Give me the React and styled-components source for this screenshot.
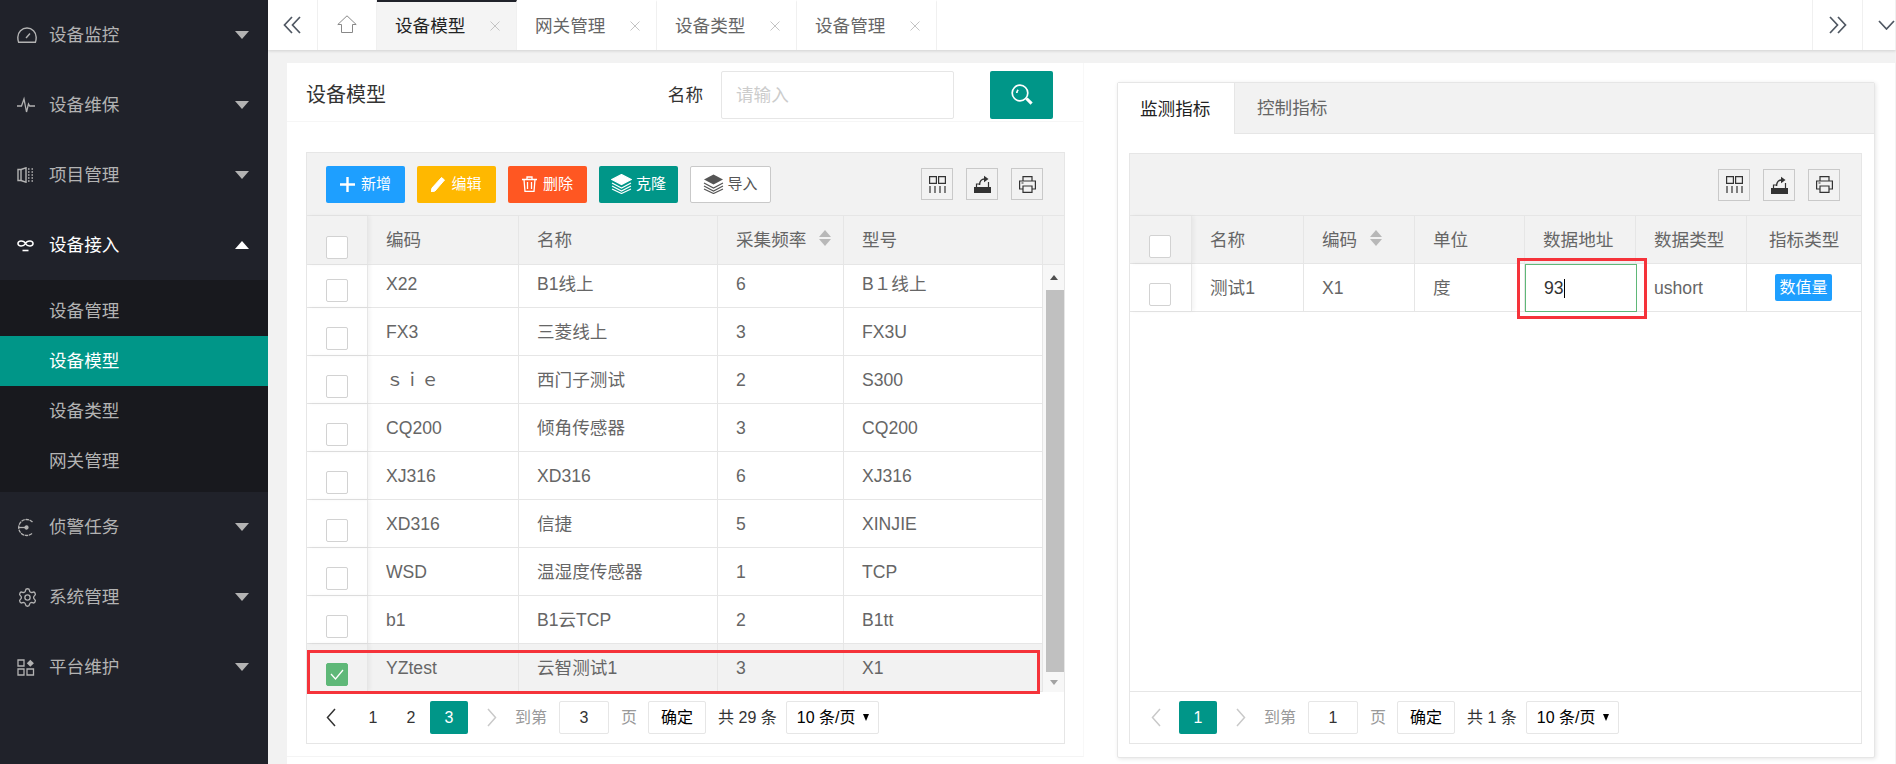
import styled, { createGlobalStyle } from "styled-components";
import { Settings } from "lucide-react";

const GlobalStyle = createGlobalStyle`
    html, body {
        margin: 0;
        height: 100%;
        overflow: hidden;
        background: #f2f2f2;
        font-family: "Liberation Sans", "Noto Sans CJK SC", sans-serif;
        line-height: 20px;
        color: #666;
    }
    * { box-sizing: border-box; }
`;

const Shell = styled.div`
    display: flex;
    height: 100vh;
`;

/* sidebar */
const Sidebar = styled.nav`
    width: 268px;
    flex: none;
    background: #20222a;
`;
const NavItem = styled.div`
    display: flex;
    align-items: center;
    height: 70px;
    padding: 0 19px 0 17px;
    font-size: 17.6px;
    color: ${(p) => (p.$open ? "#fff" : "#b3b3b3")};
`;
const NavIcon = styled.span`
    width: 32px;
    flex: none;
    display: flex;
    align-items: center;
`;
const NavLabel = styled.span`
    flex: 1;
`;
const Caret = styled.i`
    width: 0;
    height: 0;
    border-left: 7.5px solid transparent;
    border-right: 7.5px solid transparent;
    border-top: ${(p) => (p.$up ? "0" : "8px solid currentColor")};
    border-bottom: ${(p) => (p.$up ? "8px solid currentColor" : "0")};
`;
const SubMenu = styled.div`
    background: #18191e;
    padding: 6px 0;
`;
const SubItem = styled.div`
    height: 50px;
    line-height: 50px;
    padding-left: 49px;
    font-size: 17.6px;
    color: ${(p) => (p.$active ? "#fff" : "#b3b3b3")};
    background: ${(p) => (p.$active ? "#009688" : "transparent")};
`;

/* top tabs */
const Main = styled.main`
    flex: 1;
    min-width: 0;
    display: flex;
    flex-direction: column;
`;
const TabBar = styled.header`
    height: 50px;
    flex: none;
    display: flex;
    background: #fff;
    box-shadow: 0 1px 3px rgba(0, 0, 0, 0.14);
    position: relative;
    z-index: 2;
`;
const BarButton = styled.div`
    width: ${(p) => p.$w}px;
    flex: none;
    display: flex;
    align-items: center;
    justify-content: ${(p) => p.$justify || "center"};
    padding-bottom: ${(p) => p.$lift || 0}px;
    color: ${(p) => p.$fg || "#4f5762"};
    border-right: 1px solid #f0f0f0;
    overflow: hidden;
`;
const PageTab = styled.div`
    width: 140px;
    flex: none;
    display: flex;
    align-items: center;
    justify-content: space-between;
    padding: 0 16px 0 18px;
    font-size: 17.6px;
    color: ${(p) => (p.$active ? "#222" : "#666")};
    background: ${(p) => (p.$active ? "#f4f4f4" : "#fff")};
    border-right: 1px solid #f0f0f0;
    border-top: 2px solid ${(p) => (p.$active ? "#20222a" : "transparent")};
`;
const BarSpacer = styled.div`
    flex: 1;
    border-right: 1px solid #f0f0f0;
`;

/* content */
const Content = styled.div`
    flex: 1;
    min-height: 0;
    padding: 13px 1px 0 19px;
`;
const Panel = styled.div`
    height: 100%;
    display: flex;
    align-items: flex-start;
    background: #fff;
`;
const LeftPane = styled.section`
    width: 797px;
    height: 694px;
    flex: none;
    border-right: 1px solid #f8f8f8;
    border-bottom: 1px solid #f4f4f4;
`;
const PaneHeader = styled.div`
    height: 59px;
    display: flex;
    align-items: center;
    padding: 6px 30px 0 19px;
    border-bottom: 1px solid #f6f6f6;
    margin-bottom: 30px;
`;
const PaneTitle = styled.h2`
    margin: 0;
    font-size: 20px;
    font-weight: 400;
    color: #333;
    flex: 1;
`;
const FieldLabel = styled.label`
    font-size: 17.6px;
    color: #333;
    margin-right: 18px;
`;
const SearchInput = styled.input`
    width: 233px;
    height: 48px;
    padding: 0 14px;
    border: 1px solid #e6e6e6;
    border-radius: 2px;
    font: inherit;
    font-size: 17.6px;
    outline: none;
    &::placeholder { color: #ccc; }
`;
const SearchButton = styled.button`
    width: 63px;
    height: 48px;
    margin-left: 36px;
    border: 0;
    border-radius: 2px;
    background: #009688;
    color: #fff;
    display: flex;
    align-items: center;
    justify-content: center;
`;

/* table */
const TableBox = styled.div`
    position: relative;
    display: flex;
    flex-direction: column;
    width: ${(p) => p.$w}px;
    height: ${(p) => p.$h}px;
    margin-left: ${(p) => p.$ml}px;
    border: 1px solid #e6e6e6;
`;
const Toolbar = styled.div`
    height: ${(p) => p.$h}px;
    flex: none;
    display: flex;
    align-items: center;
    padding: 0 21px 0 19px;
    background: #f2f2f2;
    border-bottom: 1px solid #e6e6e6;
`;
const ButtonGroup = styled.div`
    display: flex;
    gap: 12px;
`;
const ToolGroup = styled.div`
    display: flex;
    gap: 13px;
    margin-left: auto;
`;
const ActionButton = styled.button`
    width: ${(p) => p.$w || 79}px;
    height: 37px;
    padding: 0;
    display: flex;
    align-items: center;
    justify-content: center;
    gap: ${(p) => p.$gap || 6}px;
    font: inherit;
    font-size: 15px;
    color: ${(p) => p.$fg || "#fff"};
    background: ${(p) => p.$bg};
    border: ${(p) => (p.$outlined ? "1px solid #c9c9c9" : "0")};
    border-radius: 2px;
`;
const ToolButton = styled.div`
    width: 32px;
    height: 32px;
    display: flex;
    align-items: center;
    justify-content: center;
    border: 1px solid #c9c9c9;
    color: #333;
`;
const Grid = styled.div`
    display: grid;
    grid-template-columns: ${(p) => p.$cols};
    height: ${(p) => p.$h}px;
    flex: none;
    border-bottom: 1px solid #e6e6e6;
    background: ${(p) => (p.$shade ? "#f2f2f2" : "#fff")};
    font-size: 17.6px;
    color: #666;
`;
const Cell = styled.div`
    display: flex;
    align-items: center;
    padding-left: ${(p) => p.$pad ?? 18}px;
    border-right: ${(p) => (p.$last ? "0" : "1px solid #e6e6e6")};
    white-space: nowrap;
    min-width: 0;
`;
const CheckCell = styled(Cell)`
    justify-content: flex-start;
    padding: 14px 0 0 19px;
    box-shadow: 2px 0 4px rgba(0, 0, 0, 0.05);
    position: relative;
`;
const CheckBox = styled.span`
    width: 22px;
    height: 23px;
    display: flex;
    align-items: center;
    justify-content: center;
    border-radius: 2px;
    border: 1px solid ${(p) => (p.$checked ? "#5fb878" : "#d2d2d2")};
    background: ${(p) => (p.$checked ? "#5fb878" : "#fff")};
    color: #fff;
`;
const SortMark = styled.span`
    display: inline-flex;
    flex-direction: column;
    gap: 2px;
    margin: -4px 0 0 13px;
    color: #b8b8b8;
`;
const SortUp = styled.i`
    border-left: 6.5px solid transparent;
    border-right: 6.5px solid transparent;
    border-bottom: 7px solid currentColor;
`;
const SortDown = styled.i`
    border-left: 6.5px solid transparent;
    border-right: 6.5px solid transparent;
    border-top: 7px solid currentColor;
`;
const TableBody = styled.div`
    flex: 1;
    min-height: 0;
    display: flex;
`;
const RowsViewport = styled.div`
    flex: 1;
    min-width: 0;
    overflow: hidden;
`;
const Rows = styled.div`
    margin-top: -5px;
`;
const Scrollbar = styled.div`
    width: 21px;
    flex: none;
    display: flex;
    flex-direction: column;
    background: #f7f7f7;
`;
const ScrollEnd = styled.div`
    height: ${(p) => p.$h}px;
    flex: none;
    display: flex;
    align-items: center;
    justify-content: center;
`;
const ScrollUp = styled.i`
    border-left: 4.5px solid transparent;
    border-right: 4.5px solid transparent;
    border-bottom: 5px solid #505050;
`;
const ScrollDown = styled.i`
    border-left: 4.5px solid transparent;
    border-right: 4.5px solid transparent;
    border-top: 5px solid #a3a3a3;
`;
const ScrollThumb = styled.div`
    flex: 1;
    margin: 0 0 0 3px;
    background: #c0c0c0;
`;
const EmptyBody = styled.div`
    flex: 1;
    min-height: 0;
`;
const EditCell = styled.div`
    display: flex;
    align-items: center;
    padding-left: 18px;
    border: 1px solid #5fb878;
    margin: 0 -1px -1px 0;
    background: #fff;
    color: #333;
`;
const TextCaret = styled.i`
    width: 1px;
    height: 19px;
    background: #000;
`;
const Badge = styled.span`
    width: 57px;
    height: 27px;
    display: flex;
    align-items: center;
    justify-content: center;
    background: #1e9fff;
    border-radius: 2px;
    color: #fff;
    font-size: 16px;
`;
const Highlight = styled.div`
    position: absolute;
    left: ${(p) => p.$x}px;
    top: ${(p) => p.$y}px;
    width: ${(p) => p.$w}px;
    height: ${(p) => p.$h}px;
    border: 3px solid #f5333a;
    z-index: 3;
    pointer-events: none;
`;

/* pager */
const Pager = styled.div`
    height: ${(p) => p.$h}px;
    flex: none;
    display: flex;
    align-items: center;
    padding-left: ${(p) => p.$pad}px;
    font-size: 16px;
    color: #333;
    background: #fff;
    border-top: ${(p) => (p.$line ? "1px solid #e6e6e6" : "0")};
`;
const PageNum = styled.span`
    width: 38px;
    height: 33px;
    flex: none;
    display: flex;
    align-items: center;
    justify-content: center;
    border-radius: 2px;
    color: ${(p) => (p.$current ? "#fff" : "#333")};
    background: ${(p) => (p.$current ? "#009688" : "transparent")};
`;
const PageArrow = styled(PageNum)`
    color: ${(p) => (p.$off ? "#c9c9c9" : "#333")};
    margin: ${(p) => (p.$next ? "0 4px 0 5px" : "0 4px 0 0")};
`;
const Muted = styled.span`
    color: #999;
`;
const JumpInput = styled.input`
    width: 50px;
    height: 33px;
    margin: 0 12px;
    border: 1px solid #e6e6e6;
    border-radius: 2px;
    text-align: center;
    font: inherit;
    color: #333;
    outline: none;
`;
const ConfirmButton = styled.button`
    width: 58px;
    height: 33px;
    margin: 0 12px 0 11px;
    padding: 0;
    background: #fff;
    border: 1px solid #e6e6e6;
    border-radius: 2px;
    font: inherit;
    color: #000;
`;
const PageSize = styled.div`
    width: 93px;
    height: 33px;
    margin-left: 9px;
    display: flex;
    align-items: center;
    justify-content: space-between;
    padding: 0 9px 0 10px;
    border: 1px solid #e6e6e6;
    border-radius: 2px;
    color: #000;
`;
const SizeArrow = styled.i`
    border-left: 3.5px solid transparent;
    border-right: 3.5px solid transparent;
    border-top: 7px solid #000;
`;

/* right pane */
const RightPane = styled.section`
    flex: none;
    width: 758px;
    height: 676px;
    margin: 19px 0 0 33px;
    border: 1px solid #e6e6e6;
    border-radius: 2px;
    box-shadow: 1px 1px 4px rgba(0, 0, 0, 0.1);
    display: flex;
    flex-direction: column;
    background: #fff;
`;
const TabStrip = styled.div`
    height: 51px;
    flex: none;
    display: flex;
    background: #f2f2f2;
`;
const StripTab = styled.div`
    width: ${(p) => p.$w}px;
    display: flex;
    align-items: center;
    padding-left: 22px;
    font-size: 17.6px;
    color: ${(p) => (p.$active ? "#222" : "#666")};
    background: ${(p) => (p.$active ? "#fff" : "transparent")};
    border-right: ${(p) => (p.$active ? "1px solid #e6e6e6" : "0")};
    border-bottom: ${(p) => (p.$active ? "0" : "1px solid #e6e6e6")};
`;
const StripRest = styled.div`
    flex: 1;
    border-bottom: 1px solid #e6e6e6;
`;
const StripBody = styled.div`
    padding-top: 19px;
`;

/* icons */
const Svg = styled.svg`
    display: block;
    flex: none;
    fill: none;
    stroke: currentColor;
`;
const GaugeIcon = () => (
    <Svg width="20" height="16" viewBox="0 0 20 16" strokeWidth="1.4">
        <path d="M1.6 15.2Q.8 13 .8 10.2a9.2 9.2 0 0 1 18.4 0q0 2.8-.8 5z" />
        <path d="M9 11l4-4.5" />
    </Svg>
);
const PulseIcon = () => (
    <Svg width="18" height="18" viewBox="0 0 18 18" strokeWidth="1.3">
        <path d="M0 10h4.5L7 3l2.5 13 2-8 1.2 2H18" />
    </Svg>
);
const BookIcon = () => (
    <Svg width="17" height="16" viewBox="0 0 17 16" strokeWidth="1.4">
        <path d="M1 2.5h3L9 .8v14.4l-5-1.7H1z" />
        <path d="M4 2.5v11" />
        <path d="M11 2h1.5M14.5 2H16M11 5h1.5M14.5 5H16M11 8h1.5M14.5 8H16M11 11h1.5M14.5 11H16M11 14h1.5M14.5 14H16" />
    </Svg>
);
const LinkIcon = () => (
    <Svg width="17" height="13" viewBox="0 0 17 13" strokeWidth="1.6">
        <path d="M8.5 4.5C7 1.500 1 1 1 4.500S7 7.500 8.500 4.500 16 1 16 4.500 10 7.500 8.500 4.500z" />
        <path d="M5.500 11.500h6" />
    </Svg>
);
const RadarIcon = () => (
    <Svg width="19" height="19" viewBox="0 0 19 19" strokeWidth="1.3">
        <path d="M15.500 4A8 8 0 1 0 15.500 15" strokeDasharray="3.500 .7" />
        <path d="M1 9.500h9" />
        <circle cx="9.500" cy="9.500" r="1.500" fill="currentColor" />
    </Svg>
);
const AppsIcon = () => (
    <Svg width="18" height="17" viewBox="0 0 18 17" strokeWidth="1.3">
        <path d="M1 1h6v6H1zM1 10h6v6H1zM10 10h6.500v6H10z" />
        <path d="M13.300.8l3.600 3.500-3.600 3.500-3.500-3.500z" fill="currentColor" stroke="none" />
    </Svg>
);
const ChevronsLeftIcon = () => (
    <Svg width="19" height="18" viewBox="0 0 19 18" strokeWidth="1.7">
        <path d="M9 1L1.500 9 9 17M17 1L9.500 9l7.500 8" />
    </Svg>
);
const ChevronsRightIcon = () => (
    <Svg width="18" height="18" viewBox="0 0 18 18" strokeWidth="1.7">
        <path d="M1 1l7.500 8L1 17M9 1l7.500 8L9 17" />
    </Svg>
);
const ChevronDownIcon = () => (
    <Svg width="17" height="10" viewBox="0 0 17 10" strokeWidth="1.7">
        <path d="M1 1l7.500 8L16 1" />
    </Svg>
);
const HomeIcon = () => (
    <Svg width="20" height="18" viewBox="0 0 20 18" strokeWidth="1">
        <path d="M.8 9.500L10 .8l9.200 8.700h-3.700v8h-11v-8z" />
    </Svg>
);
const CloseIcon = () => (
    <Svg width="10" height="10" viewBox="0 0 10 10" strokeWidth="1" color="#c4c4c4">
        <path d="M.5.500l9 9M9.500.500l-9 9" />
    </Svg>
);
const SearchIcon = () => (
    <Svg width="22" height="22" viewBox="0 0 22 22" strokeWidth="1.7">
        <circle cx="9" cy="9" r="7.800" />
        <path d="M5.800 9c0-1.500.5-2.500 1.400-3.200" />
        <path d="M15 15l4.500 4.500 1-1L16 14" fill="currentColor" />
    </Svg>
);
const PlusIcon = () => (
    <Svg width="15" height="15" viewBox="0 0 15 15" strokeWidth="2.400">
        <path d="M7.500 0v15M0 7.500h15" />
    </Svg>
);
const PenIcon = () => (
    <Svg width="14" height="15" viewBox="0 0 14 15" stroke="none">
        <path d="M10.500.5l3 2.500L4 14 0 15l1-4z" fill="currentColor" />
    </Svg>
);
const TrashIcon = () => (
    <Svg width="15" height="16" viewBox="0 0 15 16" strokeWidth="1.300">
        <path d="M0 3.500h15M5 3V1h5v2M2 3.500l1 12h9l1-12" />
        <path d="M5.500 6v7M9.500 6v7" />
    </Svg>
);
const LayersIcon = ({ $solid }) => (
    <Svg width="21" height="20" viewBox="0 0 21 20" strokeWidth="1.200">
        <path d="M10.500.5l9.500 5-9.500 5-9.500-5z" fill="currentColor" stroke={$solid ? "none" : "currentColor"} />
        <path d="M1 9l9.500 5L20 9M1 12l9.500 5L20 12M1 15l9.500 4.500L20 15" />
    </Svg>
);
const ColumnsIcon = () => (
    <Svg width="17" height="17" viewBox="0 0 17 17" strokeWidth="1.200">
        <path d="M.6.600h6.800v6.800H.6zM9.600.600h6.800v6.800H9.600z" />
        <path d="M1 10v7M6 10v7M11 10v7M16 10v7" />
    </Svg>
);
const ExportIcon = () => (
    <Svg width="17" height="18" viewBox="0 0 17 18" strokeWidth="1.200">
        <path d="M0 12h17v6H0z" fill="currentColor" stroke="none" />
        <path d="M2.500 12V9H5M14.500 12V7" />
        <path d="M5.500 10C5.500 6 8 4 10.500 4" strokeWidth="1.500" />
        <path d="M10 .8L14.500 4 10 7.200z" fill="currentColor" stroke="none" />
    </Svg>
);
const PrintIcon = () => (
    <Svg width="17" height="17" viewBox="0 0 17 17" strokeWidth="1.200">
        <path d="M4 5V.6h9V5M4 13H.6V5h15.800v8H13" />
        <path d="M4 10h9v6.400H4zM2.500 7h2" />
    </Svg>
);
const CheckIcon = () => (
    <Svg width="14" height="11" viewBox="0 0 14 11" strokeWidth="1.300">
        <path d="M1 5l4.500 5L13 1" />
    </Svg>
);
const PagerLeftIcon = () => (
    <Svg width="10" height="19" viewBox="0 0 10 19" strokeWidth="1.500">
        <path d="M9 1L1.500 9.500 9 18" />
    </Svg>
);
const PagerRightIcon = () => (
    <Svg width="10" height="19" viewBox="0 0 10 19" strokeWidth="1.500">
        <path d="M1 1l7.500 8.500L1 18" />
    </Svg>
);

const navTop = [
    { label: "设备监控", icon: <GaugeIcon /> },
    { label: "设备维保", icon: <PulseIcon /> },
    { label: "项目管理", icon: <BookIcon /> },
];
const navBottom = [
    { label: "侦警任务", icon: <RadarIcon /> },
    { label: "系统管理", icon: <Settings size={21} strokeWidth={1.5} /> },
    { label: "平台维护", icon: <AppsIcon /> },
];
const subItems = ["设备管理", "设备模型", "设备类型", "网关管理"];
const pageTabs = ["设备模型", "网关管理", "设备类型", "设备管理"];

const modelCols = "61px 151px 199px 126px 199px";
const modelRows = [
    ["X22", "B1线上", "6", "B１线上"],
    ["FX3", "三菱线上", "3", "FX3U"],
    ["ｓｉｅ", "西门子测试", "2", "S300"],
    ["CQ200", "倾角传感器", "3", "CQ200"],
    ["XJ316", "XD316", "6", "XJ316"],
    ["XD316", "信捷", "5", "XINJIE"],
    ["WSD", "温湿度传感器", "1", "TCP"],
    ["b1", "B1云TCP", "2", "B1tt"],
    ["YZtest", "云智测试1", "3", "X1"],
];
const metricCols = "62px 112px 111px 110px 111px 111px 1fr";

const Tools = () => (
    <ToolGroup>
        <ToolButton><ColumnsIcon /></ToolButton>
        <ToolButton><ExportIcon /></ToolButton>
        <ToolButton><PrintIcon /></ToolButton>
    </ToolGroup>
);

const Sort = () => (
    <SortMark>
        <SortUp />
        <SortDown />
    </SortMark>
);

const NavRow = ({ label, icon, open }) => (
    <NavItem $open={open}>
        <NavIcon>{icon}</NavIcon>
        <NavLabel>{label}</NavLabel>
        <Caret $up={open} />
    </NavItem>
);

export default function App() {
    return (
        <Shell>
            <GlobalStyle />
            <Sidebar>
                {navTop.map((n) => (
                    <NavRow key={n.label} {...n} />
                ))}
                <NavRow label="设备接入" icon={<LinkIcon />} open />
                <SubMenu>
                    {subItems.map((s) => (
                        <SubItem key={s} $active={s === "设备模型"}>{s}</SubItem>
                    ))}
                </SubMenu>
                {navBottom.map((n) => (
                    <NavRow key={n.label} {...n} />
                ))}
            </Sidebar>

            <Main>
                <TabBar>
                    <BarButton $w={50}><ChevronsLeftIcon /></BarButton>
                    <BarButton $w={59} $fg="#888" $lift={2}><HomeIcon /></BarButton>
                    {pageTabs.map((t, i) => (
                        <PageTab key={t} $active={i === 0}>
                            {t}
                            <CloseIcon />
                        </PageTab>
                    ))}
                    <BarSpacer />
                    <BarButton $w={50}><ChevronsRightIcon /></BarButton>
                    <BarButton $w={33} $justify="flex-end"><ChevronDownIcon /></BarButton>
                </TabBar>

                <Content>
                    <Panel>
                        <LeftPane>
                            <PaneHeader>
                                <PaneTitle>设备模型</PaneTitle>
                                <FieldLabel>名称</FieldLabel>
                                <SearchInput placeholder="请输入" />
                                <SearchButton><SearchIcon /></SearchButton>
                            </PaneHeader>

                            <TableBox $w={759} $h={592} $ml={19}>
                                <Toolbar $h={63}>
                                    <ButtonGroup>
                                        <ActionButton $bg="#1e9fff"><PlusIcon />新增</ActionButton>
                                        <ActionButton $bg="#ffb800"><PenIcon />编辑</ActionButton>
                                        <ActionButton $bg="#ff5722"><TrashIcon />删除</ActionButton>
                                        <ActionButton $bg="#009688" $gap={4}><LayersIcon />克隆</ActionButton>
                                        <ActionButton $w={81} $bg="#fff" $fg="#555" $gap={3} $outlined>
                                            <LayersIcon $solid />导入
                                        </ActionButton>
                                    </ButtonGroup>
                                    <Tools />
                                </Toolbar>
                                <Grid $cols={`${modelCols} 1fr`} $h={49} $shade>
                                    <CheckCell><CheckBox /></CheckCell>
                                    <Cell>编码</Cell>
                                    <Cell>名称</Cell>
                                    <Cell>采集频率<Sort /></Cell>
                                    <Cell>型号</Cell>
                                    <Cell $last />
                                </Grid>
                                <TableBody>
                                    <RowsViewport>
                                        <Rows>
                                            {modelRows.map((r, i) => {
                                                const selected = i === modelRows.length - 1;
                                                return (
                                                    <Grid key={r[0]} $cols={modelCols} $h={48} $shade={selected}>
                                                        <CheckCell>
                                                            <CheckBox $checked={selected}>
                                                                {selected && <CheckIcon />}
                                                            </CheckBox>
                                                        </CheckCell>
                                                        <Cell>{r[0]}</Cell>
                                                        <Cell>{r[1]}</Cell>
                                                        <Cell>{r[2]}</Cell>
                                                        <Cell>{r[3]}</Cell>
                                                    </Grid>
                                                );
                                            })}
                                        </Rows>
                                    </RowsViewport>
                                    <Scrollbar>
                                        <ScrollEnd $h={25}><ScrollUp /></ScrollEnd>
                                        <ScrollThumb />
                                        <ScrollEnd $h={20}><ScrollDown /></ScrollEnd>
                                    </Scrollbar>
                                </TableBody>
                                <Pager $h={51} $pad={5}>
                                    <PageArrow><PagerLeftIcon /></PageArrow>
                                    <PageNum>1</PageNum>
                                    <PageNum>2</PageNum>
                                    <PageNum $current>3</PageNum>
                                    <PageArrow $next $off><PagerRightIcon /></PageArrow>
                                    <Muted>到第</Muted>
                                    <JumpInput readOnly defaultValue="3" />
                                    <Muted>页</Muted>
                                    <ConfirmButton>确定</ConfirmButton>
                                    共 29 条
                                    <PageSize>10 条/页<SizeArrow /></PageSize>
                                </Pager>
                                <Highlight $x={0} $y={497} $w={733} $h={44} />
                            </TableBox>
                        </LeftPane>

                        <RightPane>
                            <TabStrip>
                                <StripTab $w={117} $active>监测指标</StripTab>
                                <StripTab $w={116}>控制指标</StripTab>
                                <StripRest />
                            </TabStrip>
                            <StripBody>
                                <TableBox $w={733} $h={591} $ml={11}>
                                    <Toolbar $h={62}>
                                        <Tools />
                                    </Toolbar>
                                    <Grid $cols={metricCols} $h={48} $shade>
                                        <CheckCell><CheckBox /></CheckCell>
                                        <Cell>名称</Cell>
                                        <Cell>编码<Sort /></Cell>
                                        <Cell>单位</Cell>
                                        <Cell>数据地址</Cell>
                                        <Cell>数据类型</Cell>
                                        <Cell $pad={22} $last>指标类型</Cell>
                                    </Grid>
                                    <Grid $cols={metricCols} $h={48}>
                                        <CheckCell><CheckBox /></CheckCell>
                                        <Cell>测试1</Cell>
                                        <Cell>X1</Cell>
                                        <Cell>度</Cell>
                                        <EditCell>93<TextCaret /></EditCell>
                                        <Cell>ushort</Cell>
                                        <Cell $pad={28} $last><Badge>数值量</Badge></Cell>
                                    </Grid>
                                    <EmptyBody />
                                    <Pager $h={52} $pad={7} $line>
                                        <PageArrow $off><PagerLeftIcon /></PageArrow>
                                        <PageNum $current>1</PageNum>
                                        <PageArrow $next $off><PagerRightIcon /></PageArrow>
                                        <Muted>到第</Muted>
                                        <JumpInput readOnly defaultValue="1" />
                                        <Muted>页</Muted>
                                        <ConfirmButton>确定</ConfirmButton>
                                        共 1 条
                                        <PageSize>10 条/页<SizeArrow /></PageSize>
                                    </Pager>
                                    <Highlight $x={387} $y={104} $w={130} $h={61} />
                                </TableBox>
                            </StripBody>
                        </RightPane>
                    </Panel>
                </Content>
            </Main>
        </Shell>
    );
}
